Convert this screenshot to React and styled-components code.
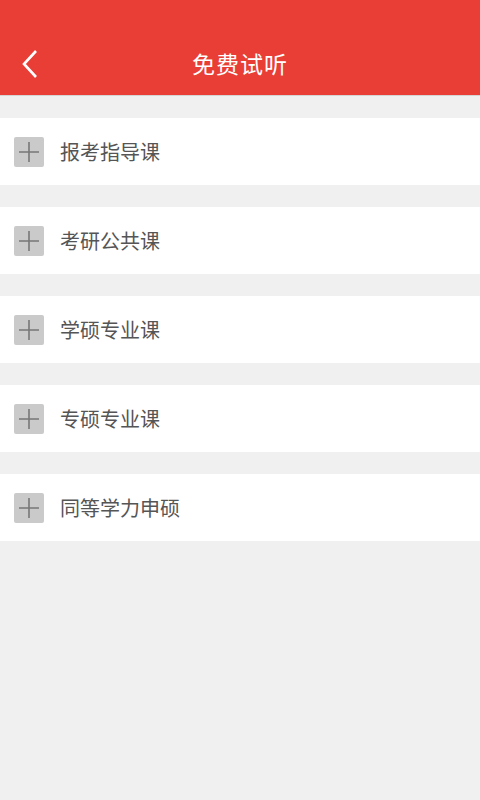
import React from "react";
import styled, { createGlobalStyle } from "styled-components";

const GlobalStyle = createGlobalStyle`
  html, body {
    margin: 0;
    padding: 0;
    background: #f0f0f0;
  }
  body {
    font-family: "Noto Sans CJK SC", "Noto Sans", sans-serif;
  }
`;

const Page = styled.div`
  width: 480px;
  min-height: 800px;
  background: #f0f0f0;
`;

const Header = styled.div`
  height: 96px;
  background: #e83e35;
  display: flex;
  align-items: center;
  justify-content: center;
  position: relative;
  border-bottom: 1px solid #d5d5d5;
  box-sizing: border-box;
  padding-top: 30px;
`;

const Back = styled.button`
  position: absolute;
  left: 16px;
  top: 44px;
  width: 28px;
  height: 40px;
  padding: 0;
  border: 0;
  background: none;
  display: flex;
  align-items: center;
  justify-content: center;
`;

const Title = styled.h1`
  margin: 0;
  color: #fff;
  font-size: 23px;
  font-weight: 400;
  letter-spacing: 1px;
`;

const List = styled.div`
  display: flex;
  flex-direction: column;
  gap: 22px;
  padding-top: 22px;
`;

const Row = styled.div`
  height: 67px;
  background: #fff;
  display: flex;
  align-items: center;
  padding-left: 14px;
  gap: 16px;
`;

const PlusBox = styled.div`
  width: 30px;
  height: 30px;
  border-radius: 2px;
  background: #cacaca;
  display: flex;
  align-items: center;
  justify-content: center;
  margin-top: 1px;
`;

const Label = styled.span`
  font-size: 20px;
  color: #555;
  margin-top: -1px;
`;

const items = ["报考指导课", "考研公共课", "学硕专业课", "专硕专业课", "同等学力申硕"];

export default function App() {
  return (
    <Page>
      <GlobalStyle />
      <Header>
        <Back>
          <svg width="18" height="30" viewBox="0 0 18 30">
            <path d="M15 2 L3 15 L15 28" fill="none" stroke="#fff" strokeWidth="2.6" />
          </svg>
        </Back>
        <Title>免费试听</Title>
      </Header>
      <List>
        {items.map((name) => (
          <Row key={name}>
            <PlusBox>
              <svg width="20" height="20" viewBox="0 0 20 20">
                <path d="M0 10 H20 M10 0 V20" stroke="#777" strokeWidth="1.6" />
              </svg>
            </PlusBox>
            <Label>{name}</Label>
          </Row>
        ))}
      </List>
    </Page>
  );
}
